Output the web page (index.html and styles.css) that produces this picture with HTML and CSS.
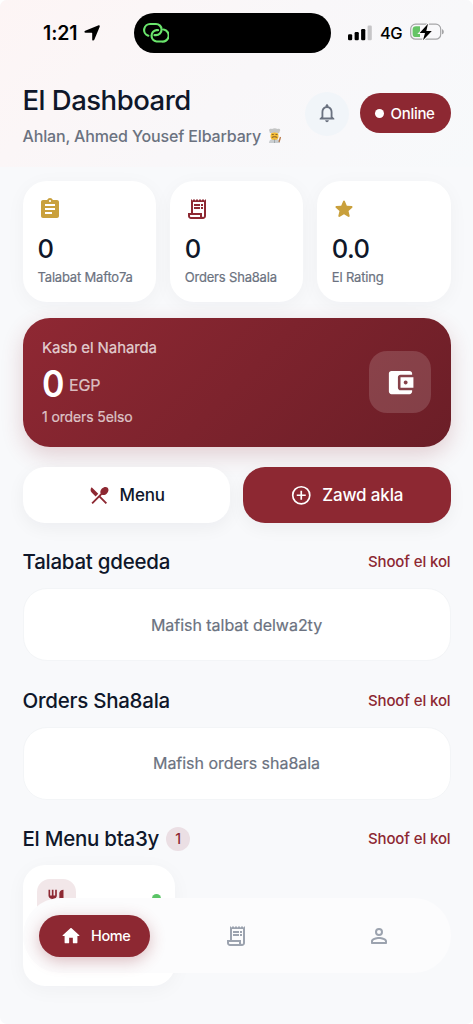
FILE: index.html
```
<!DOCTYPE html>
<html lang="ar-Latn">
<head>
<meta charset="utf-8">
<meta name="viewport" content="width=device-width, initial-scale=1">
<title>El Dashboard</title>
<link rel="stylesheet" href="styles.css">
</head>
<body>
<svg class="defs" aria-hidden="true">
  <symbol id="receipt" viewBox="0 0 24 24"><path d="M19.5 3.5L18 2l-1.5 1.5L15 2l-1.5 1.5L12 2l-1.5 1.5L9 2 7.5 3.5 6 2v14H3v3c0 1.66 1.34 3 3 3h12c1.66 0 3-1.34 3-3V2l-1.5 1.5zM15 20H6c-.55 0-1-.45-1-1v-1h10v2zm4-1c0 .55-.45 1-1 1s-1-.45-1-1v-3H8V5h11v14z"/><path d="M9 7h6v2H9zM16 7h2v2h-2zM9 10h6v2H9zM16 10h2v2h-2z"/></symbol>
</svg>
<div class="screen">
  <div class="top">
    <div class="status">
      <div class="clock"><span>1:21</span>
        <svg class="arrow" viewBox="0 0 16 16"><path d="M15.500.5c.4.4.4.8.1 1.400L10.300 14.800c-.5 1.200-2.100 1-2.100-.4V8.300c0-.3-.2-.5-.5-.5H1.600C.2 7.800 0 6.200 1.200 5.700L14.100.4c.6-.3 1-.3 1.400.1z"/></svg>
      </div>
      <div class="island">
        <svg class="link" viewBox="0 0 26 22"><path d="M5.300 13.700 A6 6 0 0 1 7.500 2 H13 A5.600 5.600 0 0 1 13 13.200 H11.500 M20.700 7.500 A6 6 0 0 1 18.500 19.500 H13.500 A5.700 5.700 0 0 1 13.500 8.200 H15"/></svg>
      </div>
      <div class="signals">
        <svg class="bars" viewBox="0 0 24 16"><rect x="0" y="9.300" width="4.200" height="6" rx="1.200"/><rect x="6.600" y="7" width="4.200" height="8.300" rx="1.200"/><rect x="13.100" y="4" width="4.200" height="11.300" rx="1.200"/><rect x="19.600" y=".5" width="4.200" height="14.800" rx="1.200" fill="#c6c5c7"/></svg>
        <span>4G</span>
        <svg class="battery" viewBox="0 0 35 18"><rect x=".7" y="1.200" width="30" height="15" rx="4.800" fill="none" stroke="#a5a5a7" stroke-width="1.200"/><path d="M32 6.200c2.400.5 2.400 4.600 0 5.100z" fill="#a5a5a7"/><path d="M6 3.300h4v10.800H6c-2.200 0-3.400-1-3.400-3.200V6.500c0-2.200 1.200-3.200 3.400-3.200z" fill="#65c466"/><path d="M18 .8L9.600 10h5.400l-2 7.300L21.800 8h-5.500z" stroke="#f9f7f8" stroke-width="2" paint-order="stroke"/></svg>
      </div>
    </div>
    <header class="head">
      <div class="intro">
        <h1>El Dashboard</h1>
        <p><span class="hello">Ahlan, Ahmed Yousef Elbarbary</span>
          <svg class="chef" viewBox="0 0 16 16"><path d="M2 15c0-3 2.500-4.500 5.500-4.500S13 12 13 15z" fill="#c9cdd0"/><rect x="3.500" y="4" width="8" height="8" rx="3.800" fill="#f4bd35"/><path d="M3 5.200L2.200 2.500C1.800.8 3.800.3 5 .9c1.500-1 4-1 5.400 0 1.500-.6 3.200.2 2.700 1.700L12 5.400c-2.800-1-6-1-9-.2z" fill="#c4c5c5"/><path d="M4.800 6.500h2M8.500 6.500h2" stroke="#74522c" stroke-width=".8"/><path d="M4.800 9.500c1.500-1 4-1 5.500 0" fill="none" stroke="#79502b"/><path d="M12 14l1.500-5" stroke="#b77645" stroke-width="1.300"/><path d="M7.500 11v4" stroke="#8e989d" stroke-width=".7"/></svg>
        </p>
      </div>
      <div class="bell"><svg viewBox="0 0 24 24"><path d="M12 22c1.100 0 2-.9 2-2h-4c0 1.100.9 2 2 2zm6-6v-5c0-3.070-1.630-5.640-4.500-6.320V4c0-.83-.67-1.500-1.500-1.500s-1.500.67-1.500 1.500v.68C7.640 5.360 6 7.920 6 11v5l-2 2v1h16v-1l-2-2zm-2 1H8v-6c0-2.480 1.510-4.500 4-4.500s4 2.020 4 4.500v6z"/></svg></div>
      <div class="online"><i></i><span>Online</span></div>
    </header>
  </div>

  <main>
    <section class="stats">
      <div class="stat gold">
        <svg viewBox="0 0 24 24"><path d="M19 3h-4.180C14.400 1.840 13.300 1 12 1c-1.300 0-2.400.84-2.820 2H5c-1.100 0-2 .9-2 2v14c0 1.100.9 2 2 2h14c1.100 0 2-.9 2-2V5c0-1.100-.9-2-2-2zm-7 0c.55 0 1 .45 1 1s-.45 1-1 1-1-.45-1-1 .45-1 1-1zm2 14H7v-2h7v2zm3-4H7v-2h10v2zm0-4H7V7h10v2z"/></svg>
        <strong>0</strong><span>Talabat Mafto7a</span>
      </div>
      <div class="stat wine">
        <svg><use href="#receipt"/></svg>
        <strong>0</strong><span>Orders Sha8ala</span>
      </div>
      <div class="stat gold">
        <svg viewBox="0 0 24 24"><path d="M12 17.270l4.150 2.510c.76.46 1.690-.22 1.490-1.080l-1.100-4.720 3.670-3.180c.67-.58.31-1.680-.57-1.750l-4.830-.41-1.890-4.460c-.34-.81-1.500-.81-1.840 0L9.190 8.630l-4.830.41c-.88.07-1.240 1.170-.57 1.750l3.670 3.180-1.100 4.720c-.2.86.73 1.540 1.490 1.080l4.150-2.500z"/></svg>
        <strong>0.0</strong><span>El Rating</span>
      </div>
    </section>

    <section class="earn">
      <div>
        <div class="earn-title">Kasb el Naharda</div>
        <div class="amount"><b>0</b><span>EGP</span></div>
        <div class="earn-sub">1 orders 5elso</div>
      </div>
      <div class="wallet"><svg viewBox="0 0 24 24"><path d="M21 18v1c0 1.100-.9 2-2 2H5c-1.110 0-2-.9-2-2V5c0-1.100.89-2 2-2h14c1.100 0 2 .9 2 2v1h-9c-1.110 0-2 .9-2 2v8c0 1.100.89 2 2 2h9zm-9-2h10V8H12v8zm4-2.500c-.83 0-1.500-.67-1.500-1.500s.67-1.500 1.500-1.500 1.500.67 1.500 1.500-.67 1.500-1.500 1.500z"/></svg></div>
    </section>

    <section class="actions">
      <div class="btn light"><svg viewBox="0 0 24 24"><path d="M8.100 13.340l2.830-2.830L3.910 3.500c-1.560 1.560-1.560 4.090 0 5.660l4.190 4.180zm6.780-1.810c1.530.71 3.680.21 5.270-1.380 1.910-1.910 2.280-4.650.81-6.120-1.460-1.460-4.200-1.100-6.120.81-1.590 1.590-2.090 3.740-1.380 5.270L3.700 19.870l1.410 1.410L12 14.410l6.880 6.880 1.410-1.410L13.410 13l1.470-1.470z"/></svg><span>Menu</span></div>
      <div class="btn dark"><svg viewBox="0 0 24 24"><path d="M12 2a10 10 0 1 0 0 20 10 10 0 0 0 0-20zm0 18.200a8.200 8.200 0 1 1 0-16.400 8.200 8.200 0 0 1 0 16.400zM11.100 7.200h1.800v3.900h3.900v1.800h-3.900v3.900h-1.800v-3.900H7.200v-1.800h3.900z"/></svg><span>Zawd akla</span></div>
    </section>

    <div class="title"><h2>Talabat gdeeda</h2><a>Shoof el kol</a></div>
    <div class="empty"><span>Mafish talbat delwa2ty</span></div>

    <div class="title"><h2>Orders Sha8ala</h2><a>Shoof el kol</a></div>
    <div class="empty"><span>Mafish orders sha8ala</span></div>

    <div class="title"><h2>El Menu bta3y</h2><em>1</em><a>Shoof el kol</a></div>
    <div class="dish">
      <div class="dish-icon"><svg viewBox="0 0 24 24"><path d="M16 6v8h3v8h2V2c-2.760 0-5 2.240-5 4zM11 9H9V2H7v7H5V2H3v7c0 2.120 1.660 3.840 3.750 3.970V22h2.500v-9.030C11.340 12.840 13 11.120 13 9V2h-2v7z"/></svg></div>
      <i></i>
    </div>
  </main>

  <nav class="nav">
    <div class="home"><svg viewBox="0 0 24 24"><path d="M10 19v-5h4v5c0 .55.45 1 1 1h3c.55 0 1-.45 1-1v-7h1.700c.46 0 .68-.57.33-.87L12.670 3.600c-.38-.34-.96-.34-1.340 0l-8.360 7.530c-.34.3-.13.87.33.87H5v7c0 .55.45 1 1 1h3c.55 0 1-.45 1-1z"/></svg><span>Home</span></div>
    <div class="tab"><svg><use href="#receipt"/></svg></div>
    <div class="tab"><svg viewBox="0 0 24 24"><path d="M12 4a4 4 0 1 0 0 8 4 4 0 0 0 0-8zm0 6a2 2 0 1 1 0-4 2 2 0 0 1 0 4zM12 13c-2.670 0-8 1.340-8 4v2c0 .55.45 1 1 1h14c.55 0 1-.45 1-1v-2c0-2.660-5.330-4-8-4zm6 5H6v-.99c.2-.72 3.300-2.010 6-2.010s5.800 1.290 6 2v1z"/></svg></div>
  </nav>
</div>
</body>
</html>
```
FILE: styles.css
```
* { box-sizing: border-box; }
body {
  margin: 0;
  background: #fff;
  font-family: Inter, "Liberation Sans", sans-serif;
  color: #0f172a;
}
h1, h2, p { margin: 0; font-weight: 500; }
svg { display: block; fill: currentColor; flex: none; }
span, strong, a, h1, h2 { white-space: nowrap; }
.defs { position: absolute; width: 0; height: 0; }

.screen {
  position: relative;
  width: 473px;
  height: 1024px;
  overflow: hidden;
  border-radius: 7px;
  background: #f8f9fb;
}

.top {
  height: 167px;
  background: linear-gradient(135deg, #fdf5f5 0%, #f9f7f9 50%, #f7f9fb 100%);
}
.status {
  display: grid;
  grid-template-columns: 133.5px 197.5px 1fr;
  padding-top: 13px;
  color: #000;
}
.clock {
  display: flex;
  align-items: center;
  gap: 5px;
  height: 40px;
  padding-left: 43px;
  font-size: 19.5px;
  font-weight: 600;
}
.clock span { width: 36px; letter-spacing: -0.1px; }
.arrow { width: 16px; height: 16px; }
.island {
  height: 40px;
  padding: 9px 0 0 9px;
  border-radius: 20px;
  background: #000;
}
.link { width: 26px; height: 22px; fill: none; stroke: #6ae56c; stroke-width: 2.2; stroke-linecap: round; }
.signals { display: flex; align-items: center; height: 40px; padding-left: 17px; }
.bars { width: 24px; height: 16px; margin-top: -1px; }
.signals span { width: 22px; margin-left: 8px; font-size: 16.5px; font-weight: 500; letter-spacing: -0.6px; }
.battery { width: 35px; height: 18px; margin: -2px 0 0 8px; }

.head { display: flex; padding: 32px 22px 0 22.5px; }
.intro { width: 282.5px; }
h1 { height: 32px; font-size: 27.5px; line-height: 31px; letter-spacing: -0.5px; }
.intro p { display: flex; align-items: center; gap: 6px; height: 20px; margin-top: 8.5px; color: #6b7280; font-size: 16px; }
.hello { letter-spacing: -0.15px; }
.chef { width: 16px; height: 16px; }
.bell {
  display: grid;
  place-items: center;
  width: 44px;
  height: 44px;
  margin-top: 6.5px;
  border-radius: 50%;
  background: #f1f5f9;
  color: #6b7280;
}
.bell svg { width: 22px; height: 22px; margin-top: -1px; }
.online {
  display: flex;
  align-items: center;
  gap: 7px;
  width: 91px;
  height: 40px;
  margin: 8px 0 0 10.5px;
  padding-left: 15px;
  border-radius: 20px;
  background: #8d2832;
  color: #fff;
  font-size: 15px;
  font-weight: 500;
  letter-spacing: -0.3px;
}
.online i { width: 9px; height: 9px; border-radius: 50%; background: #fff; }

main { padding: 14px 22.5px 0; }
.stats { display: grid; grid-template-columns: repeat(3, 1fr); gap: 13.5px; }
.stat {
  height: 121px;
  padding: 15.5px 15px 0;
  border-radius: 24px;
  background: #fff;
  box-shadow: 0 4px 20px rgba(15, 23, 42, 0.04);
}
.stat svg { width: 24px; height: 24px; }
.gold svg { color: #c9a03c; }
.wine svg { color: #8d2832; }
.stat strong { display: block; height: 30px; margin-top: 13px; font-size: 25.5px; font-weight: 500; line-height: 30px; letter-spacing: -0.6px; }
.stat span { display: block; margin-top: 5px; color: #6b7280; font-size: 13px; line-height: 16px; letter-spacing: -0.18px; -webkit-text-stroke: 0.2px; }

.earn {
  display: flex;
  justify-content: space-between;
  height: 129.5px;
  margin-top: 15.5px;
  padding: 0 19.5px;
  border-radius: 27px;
  background: linear-gradient(135deg, #8f2833 0%, #6b1e27 100%);
  box-shadow: 0 8px 22px rgba(141, 40, 50, 0.2);
  color: rgba(255, 255, 255, 0.75);
}
.earn-title { margin-top: 20px; font-size: 15px; line-height: 20px; letter-spacing: -0.1px; -webkit-text-stroke: 0.2px; }
.amount { display: flex; gap: 5px; height: 37px; margin-top: 7px; }
.amount b { width: 22px; color: #fff; font-size: 37px; font-weight: 600; line-height: 37px; transform: scaleX(0.92); transform-origin: left; }
.amount span { font-size: 16px; line-height: 41px; color: rgba(255, 255, 255, 0.7); letter-spacing: -0.2px; -webkit-text-stroke: 0.2px; }
.earn-sub { margin-top: 6px; font-size: 14px; line-height: 18px; letter-spacing: -0.12px; color: rgba(255, 255, 255, 0.7); -webkit-text-stroke: 0.2px; }
.wallet {
  display: grid;
  place-items: center;
  width: 62px;
  height: 62px;
  margin-top: 33.5px;
  border-radius: 18px;
  background: rgba(255, 255, 255, 0.15);
  color: #fff;
}
.wallet svg { width: 31px; height: 31px; }

.actions { display: grid; grid-template-columns: 1fr 1fr; gap: 13px; margin-top: 19.5px; }
.btn {
  display: flex;
  align-items: center;
  justify-content: center;
  gap: 9.5px;
  height: 56px;
  border-radius: 22px;
  font-size: 17px;
  font-weight: 500;
  letter-spacing: -0.15px;
  box-shadow: 0 5px 18px rgba(15, 23, 42, 0.05);
}
.btn svg, .btn span { margin-top: 1px; }
.btn svg { width: 22.5px; height: 22.5px; }
.light { background: #fff; }
.light svg { color: #8d2832; }
.dark { background: #8d2832; color: #fff; }

.title { display: flex; align-items: center; height: 26px; margin-top: 26px; }
.title h2 { font-size: 20.5px; font-weight: 500; letter-spacing: -0.25px; }
.title a { margin-left: auto; color: #8d2832; font-size: 15px; font-weight: 500; letter-spacing: -0.12px; }
.title em {
  width: 24px;
  height: 24px;
  margin-left: 7px;
  border-radius: 12px;
  background: #ebdfe4;
  color: #8d2832;
  font-size: 14px;
  font-style: normal;
  font-weight: 500;
  line-height: 24px;
  text-align: center;
}
.empty {
  display: grid;
  place-items: center;
  height: 73px;
  margin-top: 13.5px;
  border: 1px solid #f3f5f7;
  border-radius: 24px;
  background: #fff;
  color: #6b7280;
  font-size: 16px;
  letter-spacing: -0.03px;
  -webkit-text-stroke: 0.2px;
}
.dish {
  display: flex;
  justify-content: space-between;
  width: 152px;
  height: 121px;
  margin: 13.5px 0 0 0.5px;
  padding: 14px;
  border-radius: 22px;
  background: #fff;
  box-shadow: 0 4px 20px rgba(15, 23, 42, 0.04);
}
.dish-icon { width: 39px; height: 39px; padding: 9px; border-radius: 13px; background: #f2e7e9; color: #8d2832; }
.dish-icon svg { width: 20px; height: 20px; }
.dish i { width: 9px; height: 9px; margin-top: 14.5px; border-radius: 50%; background: #5ac466; }

/* Floating tab bar over the scrolling content */
.nav {
  position: absolute;
  left: 22.5px;
  top: 898px;
  display: grid;
  grid-template-columns: 1fr 1fr 1fr;
  align-items: center;
  width: 428px;
  height: 75px;
  border-radius: 37.5px;
  background: #fcfcfd;
}
.home {
  display: flex;
  align-items: center;
  gap: 9px;
  width: 111px;
  height: 42px;
  margin-left: 16.5px;
  padding-left: 21px;
  border-radius: 21px;
  background: #8d2832;
  box-shadow: 0 4px 16px rgba(141, 40, 50, 0.3);
  color: #fff;
  font-size: 14.5px;
  font-weight: 500;
  letter-spacing: -0.4px;
}
.home svg { width: 22px; height: 22px; }
.tab { display: grid; place-items: center; color: #9ca3af; }
.tab svg { width: 24px; height: 24px; }
```
